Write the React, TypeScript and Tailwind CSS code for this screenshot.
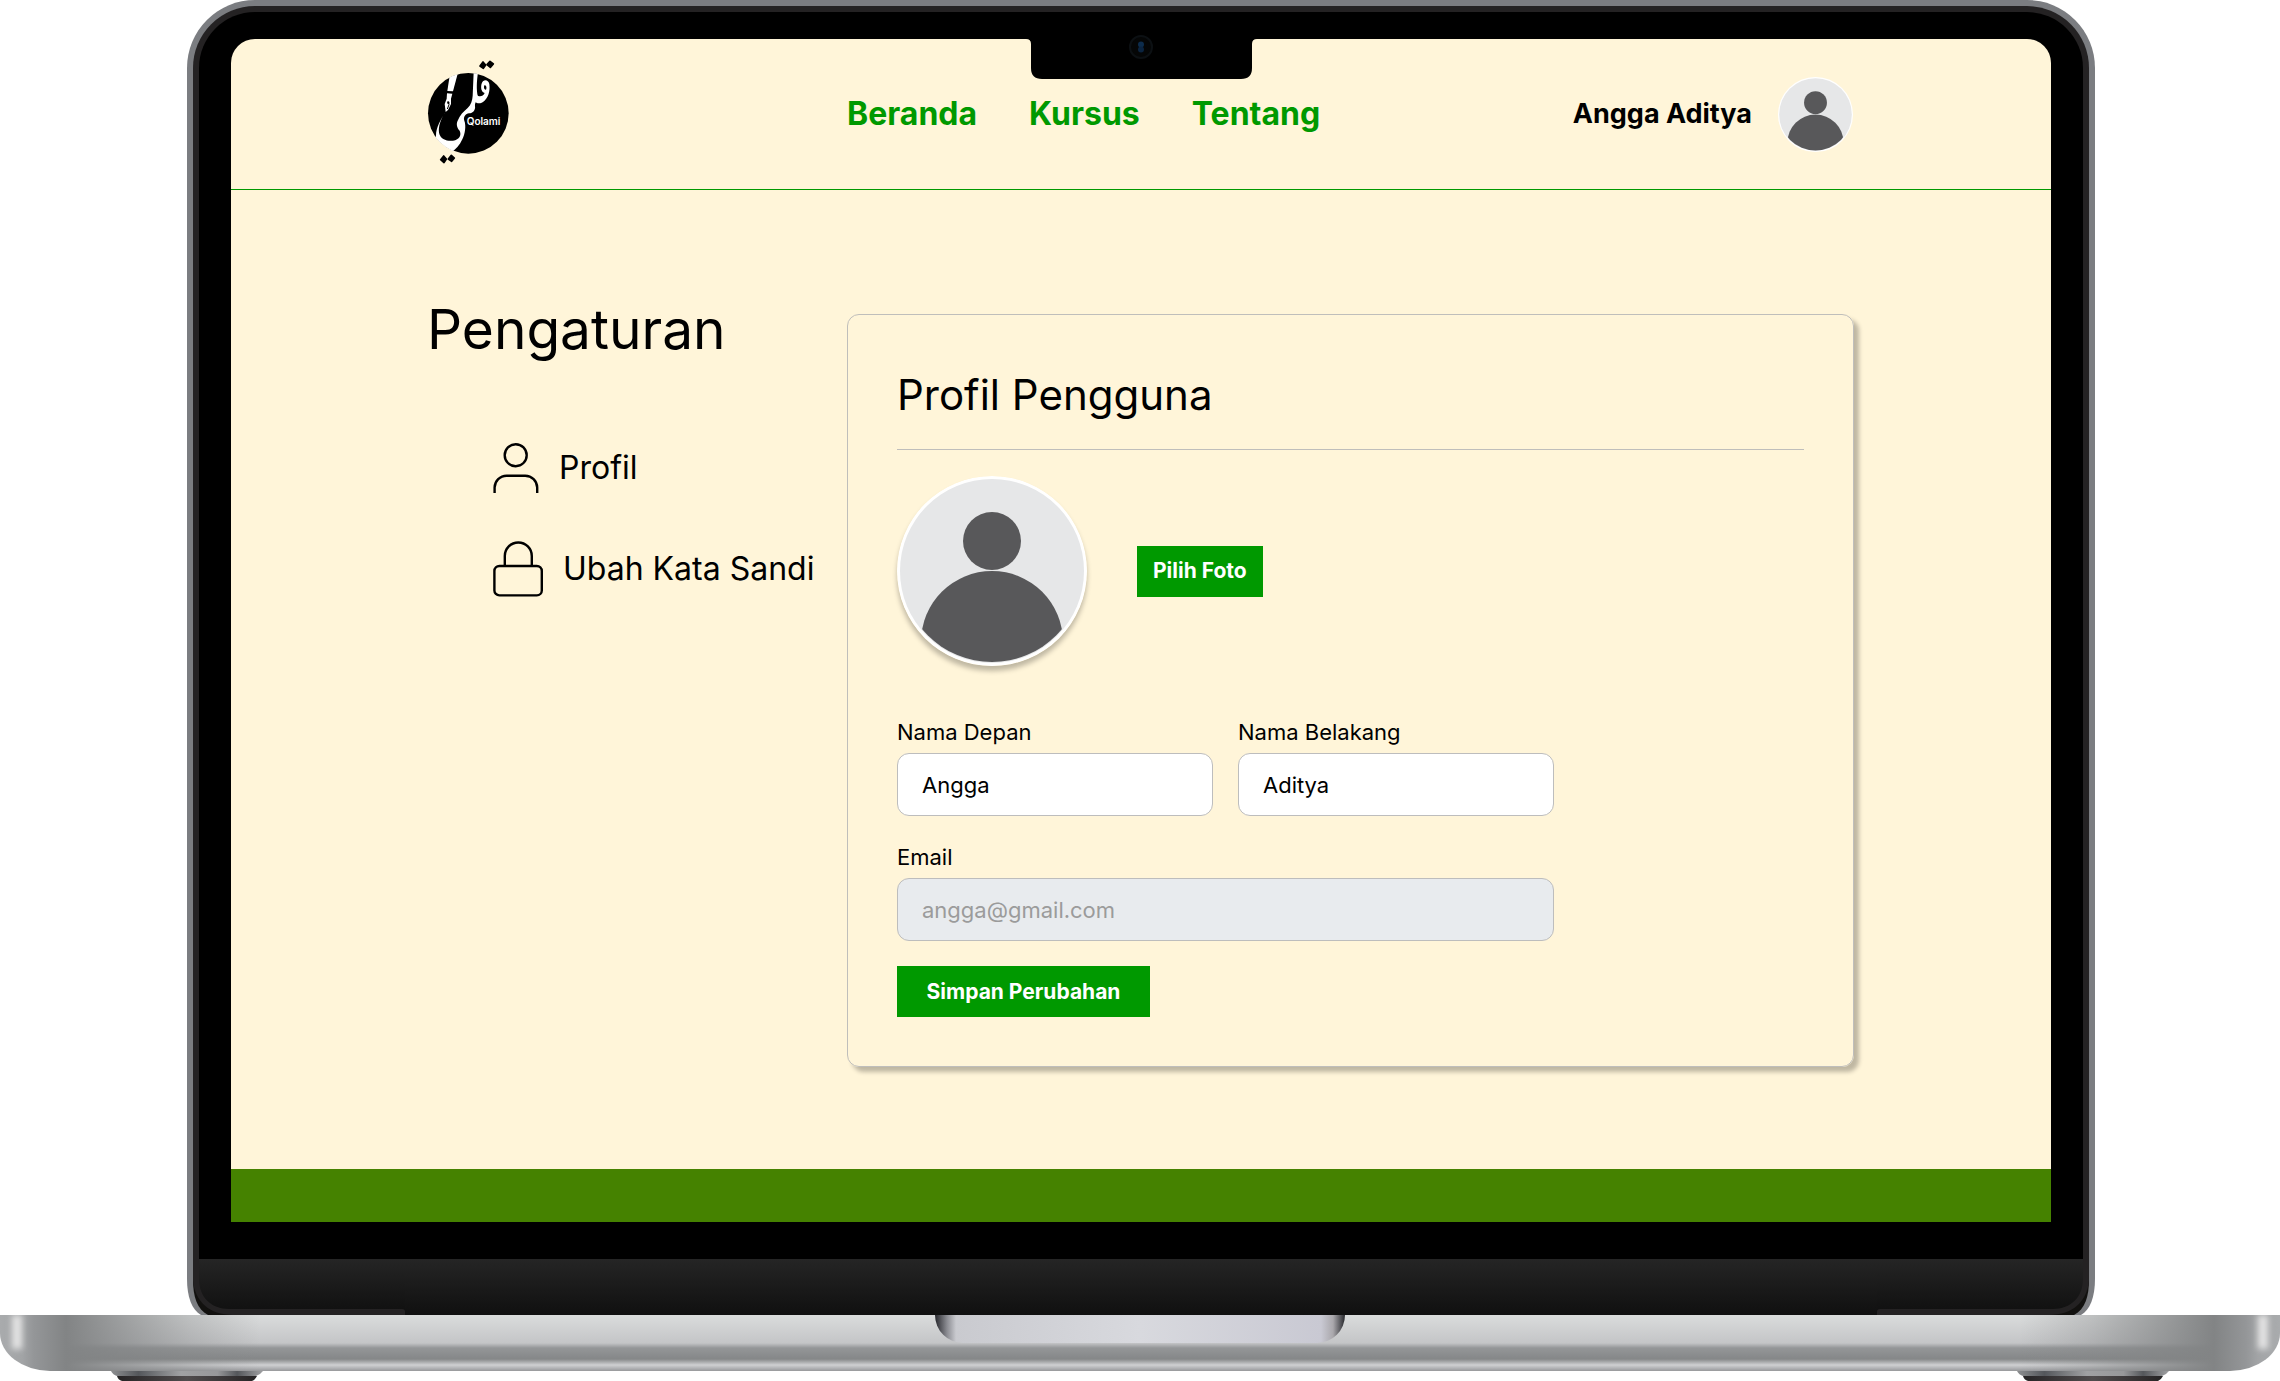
import React from "react";

function Logo() {
  return (
    <svg viewBox="80 55 252 318" className="h-[106px] w-[84px]" role="img" aria-label="Qolami">
      <defs>
        <clipPath id="logo-disc">
          <circle cx="204" cy="218" r="122" />
        </clipPath>
      </defs>
      <circle cx="204" cy="218" r="121" fill="#000" />
      <g clipPath="url(#logo-disc)" fill="#fff">
        <path d="M150 92 L174 92 L158 152 L141 151 Z" />
        <path d="M140 158 L156 159 L152 174 L152 190 L143 208 L136 214 L133 190 L139 174 Z" />
        <path d="M137 211 C120 236 114 258 116 276 C120 296 140 302 158 300 C178 296 184 284 178 270 C170 262 167 250 172 240 C178 224 190 212 202 202 C212 192 216 180 217 165 L220 94 L233 94 C229 125 228 145 232 165 C234 178 222 184 224 196 C226 208 218 218 206 218 C196 218 188 230 192 240 C198 256 194 280 186 296 C178 314 166 326 152 336 C122 330 100 304 107 284 C107 262 120 238 137 211 Z" />
        <path
          fillRule="evenodd"
          d="M243 132 C246 116 263 114 267 130 C270 152 264 172 248 184 C240 190 228 190 222 180 L229 162 C236 170 248 168 253 157 C244 154 241 144 243 132 Z M252 134 C249 142 252 148 257 147 C260 142 258 133 252 134 Z"
        />
      </g>
      <path d="M143 182 L146 192 L141 205" fill="none" stroke="#000" strokeWidth="3" />
      <circle cx="144" cy="186" r="3.5" fill="#000" />
      <g fill="#000" stroke="#000" strokeWidth="5" strokeLinejoin="round">
        <path d="M248 64 L256 73 L249 83 L239 76 Z" />
        <path d="M269 62 L279 70 L270 80 L260 72 Z" />
        <path d="M130 346 L138 355 L131 366 L121 357 Z" />
        <path d="M153 344 L162 352 L154 362 L144 355 Z" />
      </g>
      <text x="199" y="254" fontSize="30" fontWeight="600" fill="#fff">
        Qolami
      </text>
    </svg>
  );
}

function Avatar({ className }: { className: string }) {
  const clip = React.useId();
  return (
    <svg viewBox="0 0 190 190" className={className} role="img" aria-label="Foto profil">
      <clipPath id={clip}>
        <circle cx="95" cy="95" r="91" />
      </clipPath>
      <circle cx="95" cy="95" r="95" fill="#fff" />
      <circle cx="95" cy="95" r="92" fill="#e6e7e8" />
      <circle cx="95" cy="65" r="29" fill="#58585a" />
      <circle cx="95" cy="166" r="71" fill="#58585a" clipPath={`url(#${clip})`} />
    </svg>
  );
}

function UserIcon() {
  return (
    <svg viewBox="0 0 46 50" className="h-[50px] w-[46px]" fill="none" stroke="#000" strokeWidth="2.4" aria-hidden="true">
      <circle cx="22.7" cy="12.2" r="11" />
      <path d="M1.6 50 V44.5 A12 12 0 0 1 13.6 32.7 H32.2 A12 12 0 0 1 44.2 44.5 V50" />
    </svg>
  );
}

function LockIcon() {
  return (
    <svg viewBox="0 0 50 56" className="h-14 w-[50px]" fill="none" stroke="#000" strokeWidth="2.4" aria-hidden="true">
      <rect x="1.4" y="25" width="47.4" height="29.4" rx="5" />
      <path d="M11.8 25 V15 A13.5 13.5 0 0 1 38.8 15 V25" />
    </svg>
  );
}

function HingeCorner({ mirrored = false }: { mirrored?: boolean }) {
  const fill = React.useId();
  return (
    <svg viewBox="0 0 218 56" className={mirrored ? "h-14 w-[218px] -scale-x-100" : "h-14 w-[218px]"} aria-hidden="true">
      <linearGradient id={fill} x1="0" y1="0" x2="0" y2="1">
        <stop offset="0" stopColor="#252525" />
        <stop offset="1" stopColor="#101010" />
      </linearGradient>
      <path d="M0 0 V20 C0 38 5 51 14 56 H60 V0 Z" fill="#7b7d81" />
      <path d="M6 0 V20 C6 38 10 50 21 56 H218 V0 Z" fill="#12110f" />
      <path d="M6 0 V22 C8 42 22 56 46 56 H218 V0 Z" fill="#242223" />
      <path d="M12 0 V20 C12 38 24 50 42 50 H215 Q218 50 218 53 V0 Z" fill={`url(#${fill})`} />
    </svg>
  );
}

function Foot() {
  const top = React.useId();
  const bottom = React.useId();
  return (
    <svg viewBox="0 0 152 10" className="h-2.5 w-[152px]" aria-hidden="true">
      <linearGradient id={top}>
        <stop offset="0" stopColor="#8d8f91" />
        <stop offset="0.18" stopColor="#54575b" />
        <stop offset="0.46" stopColor="#a0a1a3" />
        <stop offset="0.7" stopColor="#97989a" />
        <stop offset="0.83" stopColor="#54575b" />
        <stop offset="1" stopColor="#a0a1a3" />
      </linearGradient>
      <linearGradient id={bottom}>
        <stop offset="0" stopColor="#262425" />
        <stop offset="0.5" stopColor="#504c4d" />
        <stop offset="1" stopColor="#262425" />
      </linearGradient>
      <path d="M0 0 H152 Q149 4 145 5 H6 Q2 4 0 0 Z" fill={`url(#${top})`} />
      <path d="M6 5 H146 Q144 9 141 10 H11 Q7 9 6 5 Z" fill={`url(#${bottom})`} />
    </svg>
  );
}

function Header() {
  return (
    <header className="grid h-[151px] shrink-0 grid-cols-[420px_1fr_auto] items-center border-b border-[#009900] pr-[198px] pl-[196px]">
      <a href="#beranda" className="-mt-1 w-fit">
        <Logo />
      </a>
      <nav className="flex gap-[52px] text-[32px] leading-10 font-bold text-[#009900]">
        <a href="#beranda">Beranda</a>
        <a href="#kursus">Kursus</a>
        <a href="#tentang">Tentang</a>
      </nav>
      <a href="#profil" className="flex items-center gap-[26px] text-[27px] font-bold">
        Angga Aditya
        <Avatar className="size-[75px]" />
      </a>
    </header>
  );
}

function Sidebar() {
  return (
    <aside>
      <h1 className="text-[55px] leading-[62px]">Pengaturan</h1>
      <ul className="mt-[83px] flex flex-col gap-12 pl-[66px] text-[32px] leading-10 whitespace-nowrap">
        <li>
          <a href="#profil" className="flex items-center gap-5">
            <UserIcon />
            Profil
          </a>
        </li>
        <li>
          <a href="#kata-sandi" className="flex items-center gap-5">
            <LockIcon />
            Ubah Kata Sandi
          </a>
        </li>
      </ul>
    </aside>
  );
}

const inputClass =
  "h-[63px] w-full rounded-xl border border-[#bdbdbd] bg-white px-6 text-[22px] text-black disabled:bg-[#e8ebee] disabled:text-[#9b9b9b]";

function Field({ id, label, value, type = "text", disabled = false }: { id: string; label: string; value: string; type?: string; disabled?: boolean }) {
  return (
    <div className="flex flex-col gap-[9px]">
      <label htmlFor={id} className="text-[22px] leading-6">
        {label}
      </label>
      <input id={id} type={type} defaultValue={value} disabled={disabled} className={inputClass} />
    </div>
  );
}

function ProfileCard() {
  return (
    <section className="mt-4 mr-px rounded-xl border border-[#bfbebb] px-[49px] pt-[55px] pb-[49px] shadow-[5px_5px_4px_rgba(0,0,0,0.25)]">
      <h2 className="border-b border-[#bfbebb] pb-[29px] text-[42px] leading-[50px]">Profil Pengguna</h2>
      <div className="mt-[26px] flex items-center gap-[50px]">
        <Avatar className="size-[190px] rounded-full shadow-[0_5px_5px_rgba(0,0,0,0.25)]" />
        <button type="button" className="h-[51px] bg-[#009900] px-4 text-[21px] font-bold text-white">
          Pilih Foto
        </button>
      </div>
      <form className="mt-[54px] max-w-[657px]">
        <div className="grid grid-cols-2 gap-x-[25px] gap-y-[29px]">
          <Field id="nama-depan" label="Nama Depan" value="Angga" />
          <Field id="nama-belakang" label="Nama Belakang" value="Aditya" />
          <div className="col-span-2">
            <Field id="email" label="Email" value="angga@gmail.com" type="email" disabled />
          </div>
        </div>
        <button type="button" className="mt-[25px] h-[51px] min-w-[253px] bg-[#009900] px-6 text-[21px] font-bold text-white">
          Simpan Perubahan
        </button>
      </form>
    </section>
  );
}

function CameraNotch() {
  return (
    <svg viewBox="0 0 232 52" className="absolute -top-3 left-1/2 h-[52px] w-[232px] -translate-x-1/2" aria-hidden="true">
      <path d="M1 0 V12 Q6 12 6 17 V41 Q6 52 17 52 H216 Q227 52 227 41 V17 Q227 12 232 12 V0 Z" fill="#000" />
      <circle cx="116" cy="20" r="11" fill="#050606" stroke="#0c1013" strokeWidth="2" />
      <circle cx="116" cy="17.500" r="3" fill="#0d2c4c" />
      <circle cx="116" cy="22.500" r="3" fill="#0b2440" />
    </svg>
  );
}

function Screen() {
  return (
    <div className="relative flex flex-1 flex-col rounded-t-3xl bg-[#fff5d9]">
      <CameraNotch />
      <Header />
      <main className="grid flex-1 grid-cols-[420px_1fr] items-start px-[196px] pt-[108px] pb-20">
        <Sidebar />
        <ProfileCard />
      </main>
      <footer className="h-[53px] shrink-0 bg-[#458200]" />
    </div>
  );
}

function LaptopBase() {
  return (
    <div className="relative flex h-14 shrink-0 justify-center overflow-hidden rounded-b-[50px_38px] bg-[linear-gradient(to_right,#a9abad_0,#a2a4a6_22px,#949698_34px,#828485_66px,#8284854d_190px,transparent_260px,transparent_calc(100%-260px),#8284854d_calc(100%-190px),#828485_calc(100%-66px),#949698_calc(100%-34px),#a2a4a6_calc(100%-22px),#a9abad_100%),linear-gradient(to_bottom,#dadcdc_0,#c4c5c7_28px,#949698_33px,#858788_44px,#cfd0d2_50px,#97989b_56px)]">
      <div className="absolute top-0 left-3 h-[34px] w-2.5 bg-[#e4e4e4] blur-[3px]" />
      <div className="absolute top-0 right-3 h-[34px] w-2.5 bg-[#e4e4e4] blur-[3px]" />
      <div className="h-7 w-[410px] rounded-b-[28px] bg-[linear-gradient(to_right,#26272c_0,#8b8c92_12px,#c9cacf_21px,#d8d9de_50%,#c9c9d3_calc(100%-24px),#aaa8ac_calc(100%-12px),#26272c_100%)]" />
    </div>
  );
}

export default function App() {
  return (
    <div className="flex min-h-screen flex-col bg-white font-['Inter',sans-serif] text-black">
      <div className="mr-[185px] ml-[187px] flex flex-1 flex-col">
        <div className="flex flex-1 flex-col rounded-t-[68px] border-x-6 border-t-6 border-[#7b7d81] bg-[#242223]">
          <div className="mx-1.5 mt-1.5 flex flex-1 flex-col rounded-t-[56px] bg-black px-8 pt-[27px] pb-[37px]">
            <Screen />
          </div>
        </div>
        <div className="flex">
          <HingeCorner />
          <div className="h-14 flex-1 bg-linear-to-b from-[#252525] to-[#101010]" />
          <HingeCorner mirrored />
        </div>
      </div>
      <LaptopBase />
      <div className="flex justify-between px-[111px]">
        <Foot />
        <Foot />
      </div>
    </div>
  );
}
